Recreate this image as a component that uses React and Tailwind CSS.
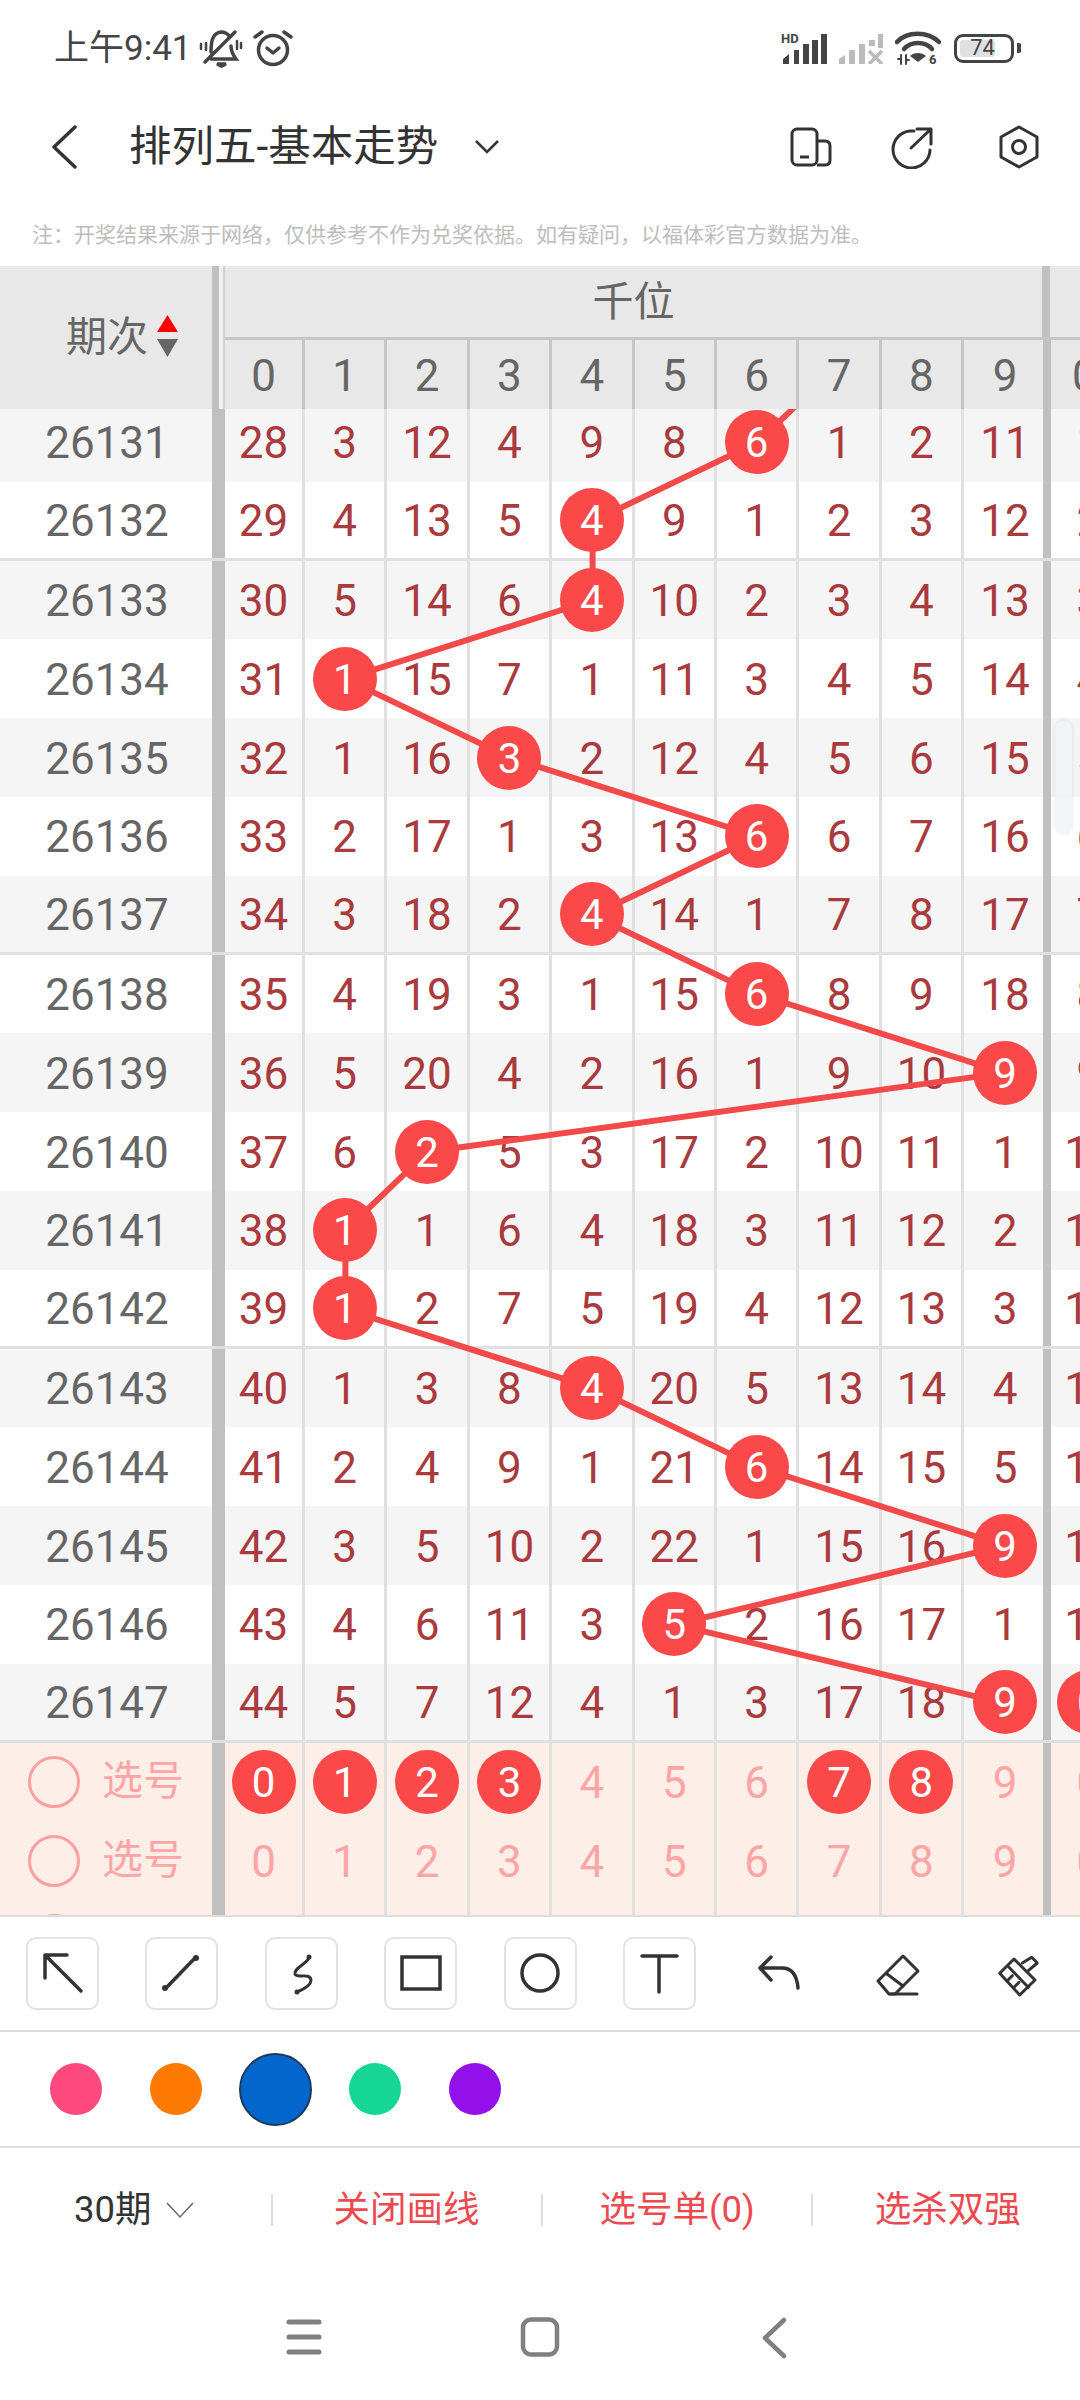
import React from 'react';

// [period, values of the ten columns, index of the hit ball, value in the next group]
const rows = [
  ['26131', [28, 3, 12, 4, 9, 8, 6, 1, 2, 11], 6, 1],
  ['26132', [29, 4, 13, 5, 4, 9, 1, 2, 3, 12], 4, 2],
  ['26133', [30, 5, 14, 6, 4, 10, 2, 3, 4, 13], 4, 3],
  ['26134', [31, 1, 15, 7, 1, 11, 3, 4, 5, 14], 1, 4],
  ['26135', [32, 1, 16, 3, 2, 12, 4, 5, 6, 15], 3, 5],
  ['26136', [33, 2, 17, 1, 3, 13, 6, 6, 7, 16], 6, 6],
  ['26137', [34, 3, 18, 2, 4, 14, 1, 7, 8, 17], 4, 7],
  ['26138', [35, 4, 19, 3, 1, 15, 6, 8, 9, 18], 6, 8],
  ['26139', [36, 5, 20, 4, 2, 16, 1, 9, 10, 9], 9, 9],
  ['26140', [37, 6, 2, 5, 3, 17, 2, 10, 11, 1], 2, 10],
  ['26141', [38, 1, 1, 6, 4, 18, 3, 11, 12, 2], 1, 11],
  ['26142', [39, 1, 2, 7, 5, 19, 4, 12, 13, 3], 1, 12],
  ['26143', [40, 1, 3, 8, 4, 20, 5, 13, 14, 4], 4, 13],
  ['26144', [41, 2, 4, 9, 1, 21, 6, 14, 15, 5], 6, 14],
  ['26145', [42, 3, 5, 10, 2, 22, 1, 15, 16, 9], 9, 15],
  ['26146', [43, 4, 6, 11, 3, 5, 2, 16, 17, 1], 5, 16],
  ['26147', [44, 5, 7, 12, 4, 1, 3, 17, 18, 9], 9, 'ball'],
];

const digits = [0, 1, 2, 3, 4, 5, 6, 7, 8, 9];
const cellWidth = ['w-[80px]', 'w-[82.4px]', 'w-[82.4px]', 'w-[82.4px]', 'w-[82.4px]', 'w-[82.4px]', 'w-[82.4px]', 'w-[82.4px]', 'w-[82.4px]', 'w-[78.8px]'];

// chart line through the balls, in coordinates of the table body
const linePoints = [
  [840, 33.5 - 78.8],
  ...rows.map((r, k) => [263 + 82.4 * r[2], 33.5 + 78.8 * k]),
].map(p => p.join(',')).join(' ');

const Ball = ({ n }) => (
  <div className="relative z-20 w-16 h-16 rounded-full bg-[#fb4848] text-white flex items-center justify-center text-[42px] shrink-0">
    <span className="block pt-[2px]">{n}</span>
  </div>
);

const Num = ({ children, className = '' }) => <span className={`block pt-[2px] ${className}`}>{children}</span>;

const Cell = ({ i, sep, children }) => (
  <div className={`${cellWidth[i]} h-full shrink-0 flex items-center justify-center ${i < 9 ? `border-r-[3px] ${sep}` : 'pl-[3px]'}`}>
    {children}
  </div>
);

const Row = ({ row, k }) => {
  const [period, values, hit, next] = row;
  return (
    <div className={`flex w-[1126px] h-[78.8px] text-[44px] leading-none ${k === 0 ? '-mt-[6px]' : ''} ${k % 2 === 0 ? 'bg-[#f5f5f5]' : 'bg-white'} ${k % 5 === 1 ? 'border-b-[3px] border-[#e0e0e0]' : ''}`}>
      <div className="w-[212px] shrink-0 flex items-center justify-center text-[#666666] pl-[2px]"><Num>{period}</Num></div>
      <div className="w-[13px] shrink-0 bg-[#c0c0c0]" />
      {values.map((v, i) => (
        <Cell key={i} i={i} sep="border-[#e0e0e0]">
          {i === hit ? <Ball n={v} /> : <Num className="text-[#a93a3d]">{v}</Num>}
        </Cell>
      ))}
      <div className="w-[8px] shrink-0 bg-[#c0c0c0]" />
      <div className="w-[76px] shrink-0 flex items-center justify-center text-[#a93a3d]">
        {next === 'ball' ? <Ball n={0} /> : <Num>{next}</Num>}
      </div>
    </div>
  );
};

const PickRow = ({ picked = [] }) => (
  <div className="flex w-[1126px] h-[78.8px] bg-[#fdeee8] text-[44px] leading-none text-[#ffa5a5]">
    <div className="w-[212px] shrink-0 flex items-center pl-[28px]">
      <div className="w-[52px] h-[52px] rounded-full border-[3px] border-[#ff9fa0] shrink-0" />
      <span className="ml-[22px] text-[41px]">选号</span>
    </div>
    <div className="w-[13px] shrink-0 bg-[#c0c0c0]" />
    {digits.map(d => (
      <Cell key={d} i={d} sep="border-[#e0e0e0]">
        {picked.includes(d) ? <Ball n={d} /> : <Num>{d}</Num>}
      </Cell>
    ))}
    <div className="w-[8px] shrink-0 bg-[#c0c0c0]" />
    <div className="w-[76px] shrink-0 flex items-center justify-center"><Num>0</Num></div>
  </div>
);

const TableHead = () => (
  <div className="flex h-[143px] bg-[#e8e8e8] text-[#666666] shrink-0">
    <div className="w-[212px] shrink-0 flex items-center pl-[66px]">
      <span className="text-[41px] leading-none">期次</span>
      <svg width="24" height="46" viewBox="0 0 24 46" className="ml-[8px]">
        <path d="M11.5 0 L22 17 H1 Z" fill="#ff0000" />
        <path d="M1 24 H22 L11.5 42 Z" fill="#666666" />
      </svg>
    </div>
    <div className="w-[7px] shrink-0 bg-[#c0c0c0]" />
    <div className="w-[6px] shrink-0 bg-[#f0f0f0] border-r-[2px] border-[#d0d0d0]" />
    <div className="w-[825px] shrink-0 flex flex-col">
      <div className="h-[71px] flex shrink-0">
        <div className="w-[817px] shrink-0 flex items-center justify-center text-[41px] pt-[2px]">千位</div>
        <div className="w-[8px] shrink-0 bg-[#c0c0c0]" />
      </div>
      <div className="h-[72px] flex border-t-[3px] border-[#c6c6c6] text-[44px] leading-none">
        {digits.map(d => <Cell key={d} i={d} sep="border-[#c6c6c6]"><Num>{d}</Num></Cell>)}
        <div className="w-[8px] shrink-0 bg-[#c0c0c0]" />
      </div>
    </div>
    <div className="flex-1 flex flex-col">
      <div className="h-[71px] shrink-0" />
      <div className="h-[72px] border-t-[3px] border-[#c6c6c6] pl-[22px] flex items-center text-[44px] leading-none"><Num>0</Num></div>
    </div>
  </div>
);

const Table = () => (
  <div className="h-[1649px] shrink-0 flex flex-col overflow-hidden">
    <TableHead />
    <div className="relative isolate h-[1506px] overflow-hidden">
      {rows.map((r, k) => <Row key={r[0]} row={r} k={k} />)}
      <PickRow picked={[0, 1, 2, 3, 7, 8]} />
      <PickRow />
      <PickRow />
      <svg className="absolute top-0 left-0 z-10" width="1080" height="1506">
        <polyline points={linePoints} fill="none" stroke="#f24a4a" strokeWidth="6" />
      </svg>
      {/* page scrollbar thumb */}
      <div className="absolute z-30 left-[1055px] top-[312px] w-[17px] h-[113px] rounded-full bg-[#f1f3f8]/80 shadow-[0_0_4px_rgba(0,0,0,0.1)]" />
    </div>
  </div>
);

const StatusBar = () => (
  <div className="h-[96px] shrink-0 flex items-center pl-[54px] pr-[59px] text-[#444444]">
    <span className="text-[35px] leading-none">上午9:41</span>
    <svg width="44" height="44" viewBox="0 0 44 44" className="ml-[7px]" fill="none" stroke="#444444" strokeWidth="3.5" strokeLinecap="round">
      <path d="M12 26 C12 14 14 7 22 6 C27 6 29 8 31 11" />
      <path d="M32 20 C32 26 34 29 37 33 H12" />
      <path d="M6 36 L36 6" />
      <path d="M18 38 H27 L22.5 40 Z" fill="#444444" />
      <path d="M7 17 V24 M2 18 V23 M38 15 V23 M42 17 V22" strokeWidth="2.5" />
    </svg>
    <svg width="42" height="38" viewBox="0 0 42 38" className="ml-[9px]" fill="none" stroke="#444444" strokeWidth="3.5" strokeLinecap="round" strokeLinejoin="round">
      <circle cx="21" cy="21" r="14.5" />
      <path d="M15 19 L21 24 L27 19" />
      <path d="M3 8 L10 3 M39 8 L32 3" />
    </svg>
    <div className="flex-1" />
    <svg width="102" height="32" viewBox="0 0 102 32" className="mr-[12px]">
      <text x="0" y="11" fontSize="13" fontWeight="700" fill="#444444" fontFamily="Roboto, sans-serif">HD</text>
      <path d="M2 32 V27 L8 22 V32 Z M13 32 V18 H18 V32 Z M22 32 V12 H28 V32 Z M31 32 V8 H37 V32 Z M40 32 V2 H46 V32 Z" fill="#444444" />
      <path d="M58 32 V27 L64 23 V32 Z M68 32 V18 H74 V32 Z M78 32 V12 H84 V32 Z M88 14 V8 H94 V14 Z M97 16 V2 H102 V16 Z" fill="#bbbbbb" />
      <path d="M88 19 L101 32 M101 19 L88 32" stroke="#bbbbbb" strokeWidth="3.5" />
    </svg>
    <svg width="46" height="34" viewBox="0 0 46 34" className="mr-[13px]" fill="none" stroke="#444444" strokeLinecap="round">
      <path d="M2 11 C12 0 33 0 44 11" strokeWidth="4.5" />
      <path d="M9 18 C16 10 30 10 37 18" strokeWidth="4.5" />
      <path d="M15 25 C19 21 27 21 31 25 L23 31 Z" fill="#444444" stroke="none" />
      <path d="M6 24 V33 M11 24 V33 M3 28 H6 M11 29 H14" strokeWidth="2" />
      <text x="34" y="33" fontSize="13" fontWeight="700" fill="#444444" stroke="none" fontFamily="Roboto, sans-serif">6</text>
    </svg>
    <div className="relative w-[60px] h-[29px] rounded-[9px] border-[3px] border-[#444444] shrink-0 overflow-hidden">
      <div className="absolute left-[3px] top-[3px] bottom-[3px] w-[35px] rounded-[3px] bg-[#e0e0e0]" />
      <span className="absolute inset-0 flex items-center justify-center text-[22px] leading-none pr-[3px]">74</span>
    </div>
    <div className="w-[4px] h-[10px] ml-[3px] rounded-r-[2px] bg-[#444444]" />
  </div>
);

const Header = () => (
  <div className="h-[102px] shrink-0 flex items-center text-[#333333]">
    <svg width="30" height="44" viewBox="0 0 30 44" className="ml-[49px]" fill="none" stroke="#333333" strokeWidth="3.5" strokeLinecap="round" strokeLinejoin="round">
      <path d="M26 2 L5 22 L26 42" />
    </svg>
    <span className="ml-[50px] text-[42.5px] leading-none">排列五-基本走势</span>
    <svg width="26" height="16" viewBox="0 0 26 16" className="ml-[36px]" fill="none" stroke="#333333" strokeWidth="2.5">
      <path d="M2 2 L13 13 L24 2" />
    </svg>
    <div className="flex-1" />
    <svg width="42" height="40" viewBox="0 0 42 40" fill="none" stroke="#333333" strokeWidth="3">
      <rect x="2" y="2" width="25" height="36" rx="5" />
      <path d="M27 14 H35 Q40 14 40 19 V33 Q40 38 35 38 H27" />
      <path d="M10 30 H19" />
    </svg>
    <svg width="44" height="44" viewBox="0 0 44 44" className="ml-[58px]" fill="none" stroke="#333333" strokeWidth="3" strokeLinecap="round" strokeLinejoin="round">
      <path d="M40 25 A18.5 18.5 0 1 1 20 6 H24" />
      <path d="M21 23 L41 4 M27 4 H41 V19" />
    </svg>
    <svg width="40" height="44" viewBox="0 0 40 44" className="ml-[65px] mr-[41px]" fill="none" stroke="#333333" strokeWidth="3" strokeLinejoin="round">
      <path d="M20 2 L38 12 V32 L20 42 L2 32 V12 Z" />
      <circle cx="20" cy="22" r="6.5" />
    </svg>
  </div>
);

const Tool = ({ children }) => (
  <div className="w-[73px] h-[73px] rounded-[10px] border-2 border-[#e2e2e2] shrink-0 flex items-center justify-center">
    <svg width="73" height="73" viewBox="0 0 73 73" className="shrink-0" fill="none" stroke="#333333" strokeWidth="3.5" strokeLinecap="round">
      {children}
    </svg>
  </div>
);

const Toolbar = () => (
  <div className="h-[115px] shrink-0 flex items-center pl-[26px] border-b-2 border-[#dddddd]">
    <div className="flex gap-[46.4px]">
      <Tool><path d="M19 18 H41 M19 18 V41 M19 18 L55 54" /></Tool>
      <Tool>
        <path d="M50 21 L21 51" />
        <circle cx="51" cy="21" r="3" fill="#333333" stroke="none" />
        <circle cx="20" cy="51" r="3" fill="#333333" stroke="none" />
      </Tool>
      <Tool>
        <path d="M44 21 C40 28 29 31 30 37 C31 42 45 35 46 43 C46 49 37 53 32 55" strokeWidth="3" />
        <circle cx="44" cy="20" r="2.5" fill="#333333" stroke="none" />
        <circle cx="32" cy="55" r="2.5" fill="#333333" stroke="none" />
      </Tool>
      <Tool><rect x="18" y="20" width="38" height="32" /></Tool>
      <Tool><circle cx="36" cy="36" r="18" /></Tool>
      <Tool><path d="M19 19 H54 M36 19 V55" /></Tool>
    </div>
    <svg width="44" height="40" viewBox="0 0 44 40" className="ml-[60px]" fill="none" stroke="#333333" strokeWidth="3.5" strokeLinecap="round" strokeLinejoin="round">
      <path d="M15 3 L4 14 L15 26 M4 14 H26 C36 14 41 22 42 34" />
    </svg>
    <svg width="60" height="50" viewBox="0 0 60 50" className="ml-[69px]" fill="none" stroke="#333333" strokeWidth="3" strokeLinecap="round" strokeLinejoin="round">
      <path d="M34 7 L49 22 L26 45 H20 L9 32 Z" />
      <path d="M18 25 L34 37" />
      <path d="M22 45 H48" />
    </svg>
    <svg width="50" height="50" viewBox="0 0 50 50" className="ml-[65px]" fill="none" stroke="#333333" strokeWidth="3" strokeLinecap="round" strokeLinejoin="round">
      <path d="M20 10 L41 31 L25.7 46 L5.7 24.3 Z" />
      <path d="M28.3 14 L37.7 8.3 L43.3 14 L34.3 21.7" />
      <path d="M15 18.3 L34.3 38.3 M13.3 31.7 L18.3 26.7 M20 38.3 L25 33.3" />
    </svg>
  </div>
);

const Swatches = () => (
  <div className="h-[116px] shrink-0 flex items-center border-b-2 border-[#dddddd]">
    <div className="w-[52px] h-[52px] rounded-full bg-[#ff4a80] ml-[50px] shrink-0" />
    <div className="w-[52px] h-[52px] rounded-full bg-[#ff7a00] ml-[48px] shrink-0" />
    <div className="w-[73px] h-[73px] rounded-full bg-[#0266cc] border-2 border-[#1d3a5c] ml-[37px] shrink-0" />
    <div className="w-[52px] h-[52px] rounded-full bg-[#16d695] ml-[37px] shrink-0" />
    <div className="w-[52px] h-[52px] rounded-full bg-[#9310ea] ml-[48px] shrink-0" />
  </div>
);

const BottomBar = () => (
  <div className="h-[124px] shrink-0 flex items-center text-[36.5px] leading-none text-[#ec4a50]">
    <span className="ml-[74px] text-[#333333]">30期</span>
    <svg width="30" height="18" viewBox="0 0 30 18" className="ml-[13px]" fill="none" stroke="#666666" strokeWidth="1.5">
      <path d="M2 2 L15 16 L28 2" />
    </svg>
    <div className="w-[2px] h-[32px] bg-[#dddddd] ml-[76px] shrink-0" />
    <span className="ml-[61px]">关闭画线</span>
    <div className="w-[2px] h-[32px] bg-[#dddddd] ml-[61px] shrink-0" />
    <span className="ml-[57px]">选号单(0)</span>
    <div className="w-[2px] h-[32px] bg-[#dddddd] ml-[56px] shrink-0" />
    <span className="ml-[62px]">选杀双强</span>
  </div>
);

const NavBar = () => (
  <div className="flex-1 flex items-start pt-[45px]">
    <svg width="36" height="40" viewBox="0 0 36 40" className="ml-[286px]" fill="none" stroke="#808080" strokeWidth="5" strokeLinecap="round">
      <path d="M3 5 H33 M3 20 H33 M3 35 H33" />
    </svg>
    <svg width="40" height="40" viewBox="0 0 40 40" className="ml-[198px]" fill="none" stroke="#808080" strokeWidth="4.5">
      <rect x="3" y="2.5" width="34" height="35" rx="8" />
    </svg>
    <svg width="28" height="42" viewBox="0 0 28 42" className="ml-[200px]" fill="none" stroke="#808080" strokeWidth="4.5" strokeLinecap="round" strokeLinejoin="round">
      <path d="M24 3 L5 21 L24 39" />
    </svg>
  </div>
);

export default function App() {
  return (
    <div className="w-[1080px] h-[2400px] bg-white overflow-hidden flex flex-col [font-family:Roboto,'Noto_Sans_CJK_SC',sans-serif]">
      <StatusBar />
      <Header />
      <div className="h-[68px] shrink-0 pl-[32px] pt-[27px] text-[21px] leading-none text-[#bdbdbd]">
        注：开奖结果来源于网络，仅供参考不作为兑奖依据。如有疑问，以福体彩官方数据为准。
      </div>
      <Table />
      <div className="h-[2px] bg-[#dddddd] shrink-0" />
      <Toolbar />
      <Swatches />
      <BottomBar />
      <NavBar />
    </div>
  );
}
